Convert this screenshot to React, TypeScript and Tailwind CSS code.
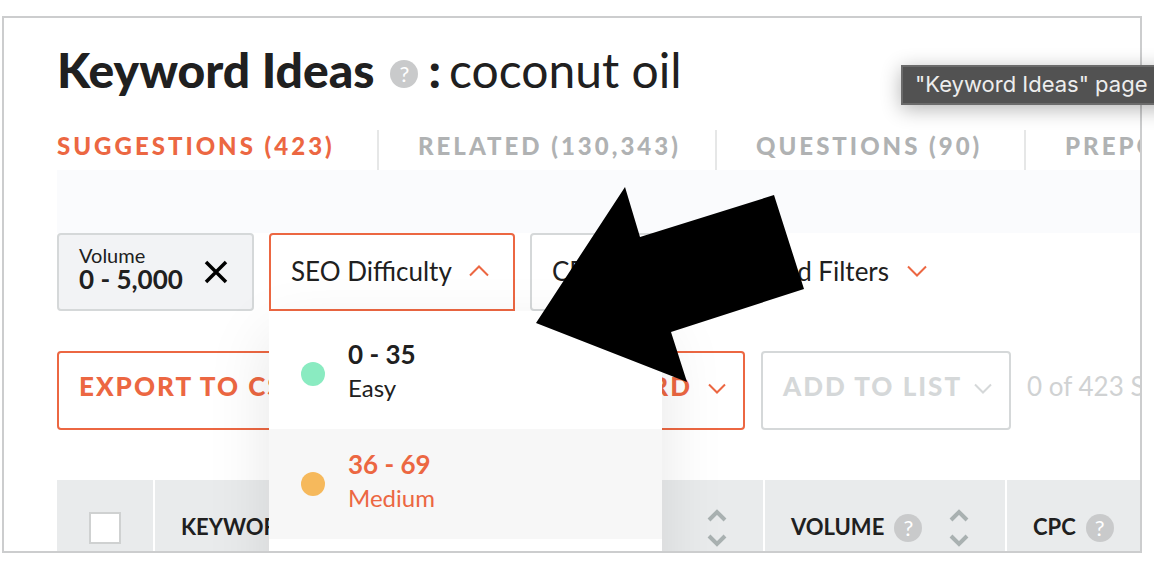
import { useState } from "react";
import clsx from "clsx";

const tabs = [
  { name: "Suggestions", count: "423", width: "w-[320px]" },
  { name: "Related", count: "130,343", width: "w-[338px] pl-[39px]" },
  { name: "Questions", count: "90", width: "w-[309px] pl-[39px]" },
  { name: "Prepositions", count: "1,204", width: "w-[340px] pl-[39px]" },
];

const difficulties = [
  { range: "0 - 35", label: "Easy", dot: "bg-[#8aebc1]" },
  { range: "36 - 69", label: "Medium", dot: "bg-[#f6b95c]" },
];

function Chevron({ up = false }: { up?: boolean }) {
  return (
    <svg
      width="20"
      height="12"
      viewBox="0 0 20 12"
      fill="none"
      stroke="currentColor"
      strokeWidth="2"
      className="shrink-0"
    >
      <path d={up ? "M1 10.5 L10 1.5 L19 10.5" : "M1 1.5 L10 10.5 L19 1.5"} />
    </svg>
  );
}

// same shape, a little narrower, for the action buttons
function SmallChevron() {
  return (
    <svg
      width="18"
      height="11"
      viewBox="0 0 18 11"
      fill="none"
      stroke="currentColor"
      strokeWidth="2"
      className="shrink-0"
    >
      <path d="M1 1.5 L9 9.5 L17 1.5" />
    </svg>
  );
}

function Help() {
  return (
    <span className="flex size-7 shrink-0 items-center justify-center rounded-full bg-[#c9cacb] text-[22px] leading-none font-normal text-white">
      ?
    </span>
  );
}

function Sort() {
  return (
    <svg
      width="20"
      height="38"
      viewBox="0 0 20 38"
      fill="none"
      stroke="#a9b1b1"
      strokeWidth="4"
      className="ml-auto shrink-0"
    >
      <path d="M2 11 L10 3 L18 11 M2 27 L10 35 L18 27" />
    </svg>
  );
}

export default function App() {
  const [tab, setTab] = useState("Suggestions");
  const [open, setOpen] = useState(true);
  const [selected, setSelected] = useState("Medium");

  return (
    <div className="relative flex h-screen flex-col overflow-hidden bg-white pt-4 pr-3 pb-[19px] pl-0.5 font-['Lato',sans-serif] text-[#202020]">
      <main className="min-h-0 flex-1 overflow-hidden border-2 border-[#cccdce] pl-[53px] whitespace-nowrap">
        <header className="flex h-28 items-center pb-2">
          <h1 className="flex items-center text-5xl font-black">
            Keyword Ideas
            <span className="mt-2 ml-4">
              <Help />
            </span>
            <span className="ml-2.5">:</span>
            <span className="ml-2 font-normal">coconut oil</span>
          </h1>
        </header>

        <nav className="flex h-10">
          {tabs.map((t, i) => (
            <button
              key={t.name}
              onClick={() => setTab(t.name)}
              className={clsx(
                "h-10 shrink-0 pb-2 text-left text-2xl font-black tracking-[3px] uppercase",
                t.width,
                i > 0 && "border-l-2 border-[#e6e7e7]",
                tab === t.name ? "text-[#ec6742]" : "text-[#b0b2b3]"
              )}
            >
              {t.name} ({t.count})
            </button>
          ))}
        </nav>

        <div className="h-[63px] bg-[#fafbfd]" />

        <div className="flex gap-[15px] text-[26px]">
          <div className="flex h-[78px] w-[197px] shrink-0 items-center justify-between rounded-sm border-2 border-[#d5d8d9] bg-[#f2f3f5] pr-6 pl-5">
            <div className="pb-2.5">
              <div className="text-xl leading-6">Volume</div>
              <div className="leading-6 font-bold">0 - 5,000</div>
            </div>
            <button aria-label="Clear volume">
              <svg
                width="24"
                height="24"
                viewBox="0 0 24 24"
                stroke="#000"
                strokeWidth="3.5"
              >
                <path d="M2 2 L22 22 M22 2 L2 22" />
              </svg>
            </button>
          </div>

          <div className="relative shrink-0">
            <button
              onClick={() => setOpen((v) => !v)}
              aria-expanded={open}
              className="flex h-[78px] w-[246px] items-center justify-between rounded-t-sm border-2 border-[#ec6742] bg-white pr-6 pb-0.5 pl-5"
            >
              SEO Difficulty
              <span className="text-[#ec6742]">
                <Chevron up />
              </span>
            </button>
            {open && (
              <div className="absolute top-full left-0 z-10 w-[393px] bg-white pt-2 pb-20 shadow-[0_24px_60px_rgba(0,0,0,0.1)]">
                {difficulties.map((d) => (
                  <button
                    key={d.label}
                    onClick={() => setSelected(d.label)}
                    className={clsx(
                      "flex h-[110px] w-full items-center gap-[23px] pl-8 text-left",
                      selected === d.label && "bg-[#f7f7f7] text-[#ec6742]"
                    )}
                  >
                    <span className={clsx("size-6 rounded-full", d.dot)} />
                    <span className="pb-1.5">
                      <span className="block leading-[34px] font-bold">
                        {d.range}
                      </span>
                      <span className="block text-2xl leading-[34px]">
                        {d.label}
                      </span>
                    </span>
                  </button>
                ))}
              </div>
            )}
          </div>

          <button className="flex h-[78px] w-[140px] shrink-0 items-center justify-between rounded-sm border-2 border-[#d5d8d9] pr-5 pb-0.5 pl-5">
            CPC
            <span className="text-[#ec6742]">
              <Chevron />
            </span>
          </button>

          <button className="flex h-[78px] w-[242px] shrink-0 items-center justify-end gap-[18px] pb-0.5">
            Advanced Filters
            <span className="text-[#ec6742]">
              <Chevron />
            </span>
          </button>
        </div>

        <div className="mt-10 flex items-center gap-4 text-[26px]">
          <button className="h-[79px] w-[272px] shrink-0 rounded-sm border-2 border-[#ec6742] pb-2 pl-5 text-left font-black tracking-[2px] text-[#ec6742] uppercase">
            Export to CSV
          </button>
          <button className="flex h-[79px] w-[400px] shrink-0 items-center justify-end gap-4 rounded-sm border-2 border-[#ec6742] pr-[17px] pb-1 font-black tracking-[2px] text-[#ec6742] uppercase">
            <span className="pb-1">Keyword</span>
            <SmallChevron />
          </button>
          <button className="flex h-[79px] w-[250px] shrink-0 items-center justify-between rounded-sm border-2 border-[#d5d8d9] pr-[17px] pb-1 pl-5 font-black tracking-[2px] text-[#d5d8d9] uppercase">
            <span className="pb-1">Add to list</span>
            <SmallChevron />
          </button>
          <span className="pb-2 text-[#d0d2d3]">0 of 423 Selected</span>
        </div>

        <table className="mt-[50px] w-[1240px] table-fixed border-collapse bg-[#e9ebec] text-[22px] font-black">
          <thead>
            <tr className="h-24">
              <th className="w-[97px] border-r-2 border-white">
                <input
                  type="checkbox"
                  aria-label="Select all keywords"
                  className="mx-auto block size-8 appearance-none border-2 border-[#cfd1d1] bg-white"
                />
              </th>
              <th className="w-[610px] border-r-2 border-white pr-9 pl-[26px]">
                <div className="flex items-center">
                  <span className="pb-1 uppercase">Keyword</span>
                  <Sort />
                </div>
              </th>
              <th className="w-[242px] border-r-2 border-white pr-9 pl-[26px]">
                <div className="flex items-center gap-2.5">
                  <span className="pb-1 uppercase">Volume</span>
                  <Help />
                  <Sort />
                </div>
              </th>
              <th className="pl-[26px]">
                <div className="flex items-center gap-2.5">
                  <span className="pb-1 uppercase">CPC</span>
                  <Help />
                </div>
              </th>
            </tr>
          </thead>
        </table>
      </main>

      <svg
        width="268"
        height="196"
        viewBox="0 0 268 196"
        className="pointer-events-none absolute top-[187px] left-[536px] z-20"
      >
        <path d="M0 136 L89 0 L104 50 L238 8 L268 102 L135 145 L151 195 Z" />
      </svg>

      <div
        role="tooltip"
        className="absolute top-[65px] left-[901px] z-20 h-10 border-2 border-[#6b6b6b] bg-[#525252] px-3 font-['Inter',sans-serif] text-[22px] leading-[34px] whitespace-nowrap text-[#ededed] shadow-[0_4px_20px_rgba(0,0,0,0.3)]"
      >
        "Keyword Ideas" page will
      </div>
    </div>
  );
}
